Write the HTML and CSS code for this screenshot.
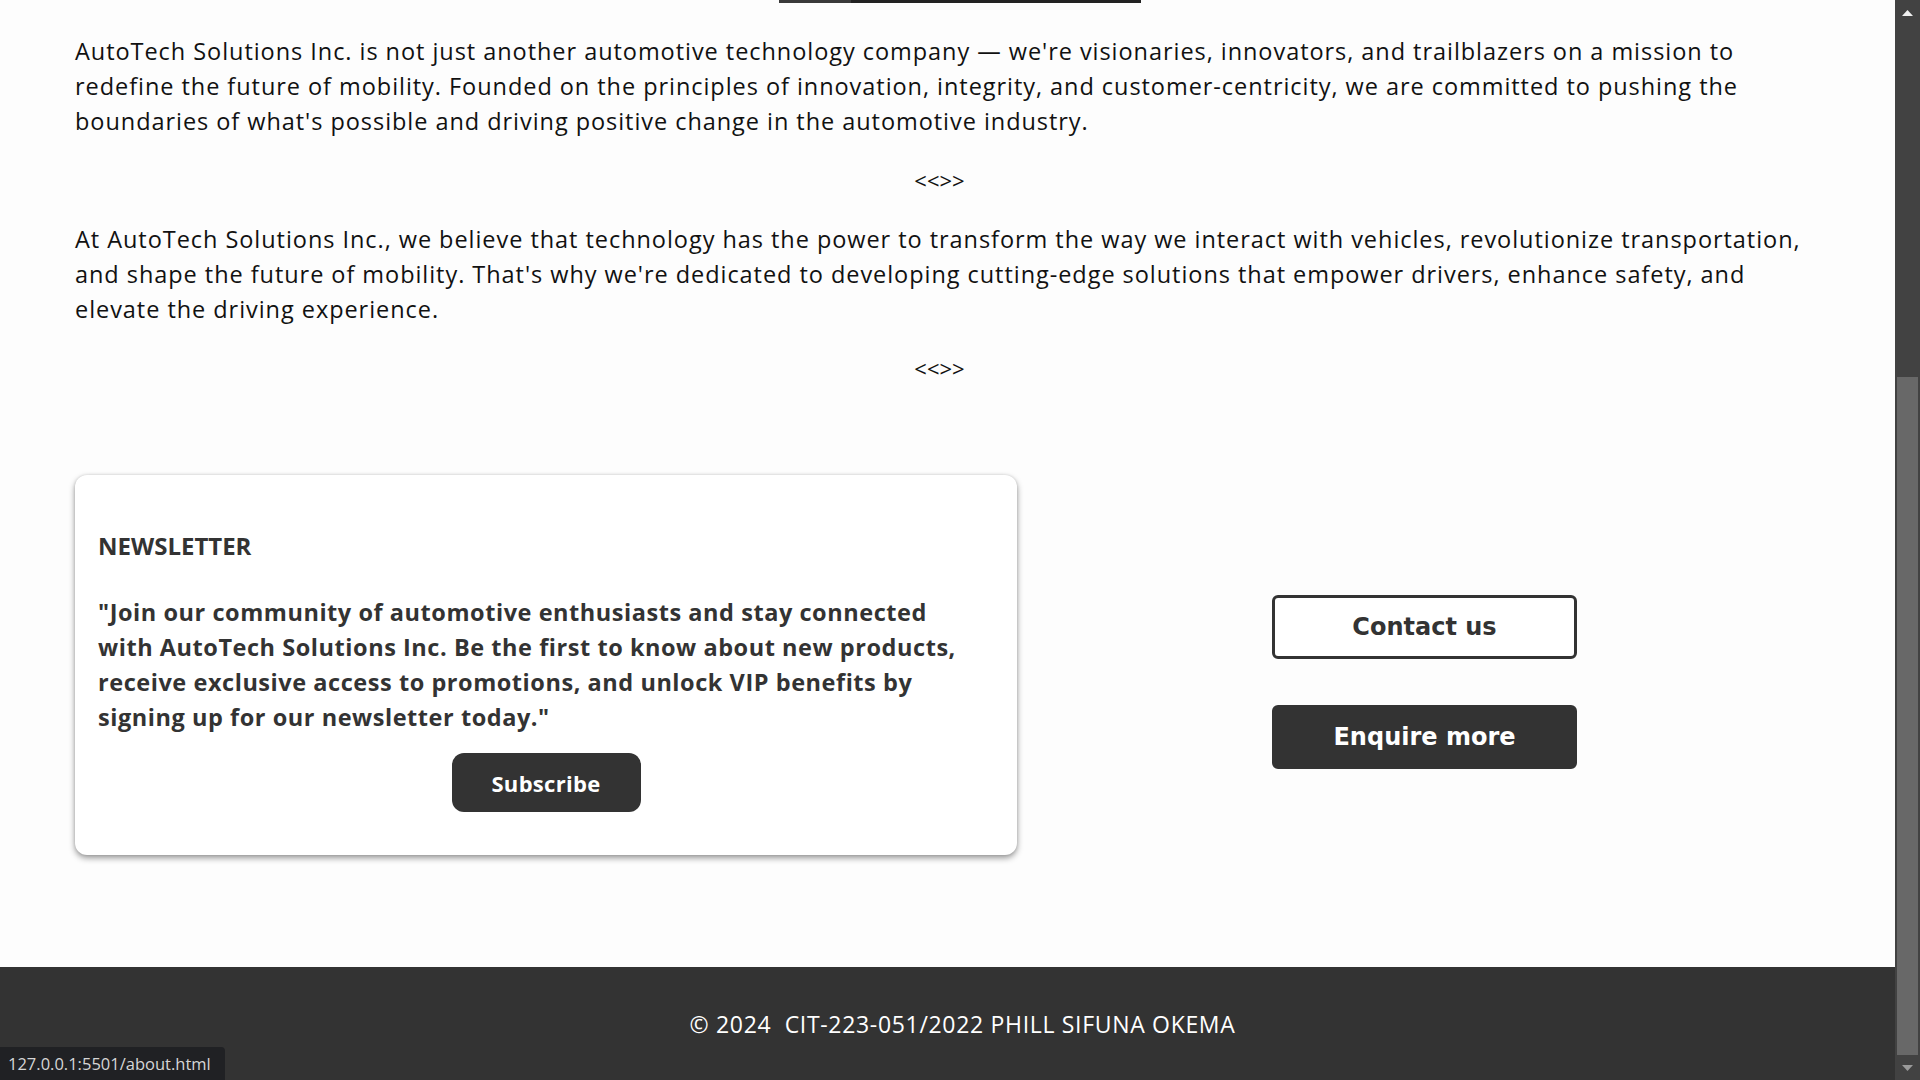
FILE: index.html
```html
<!DOCTYPE html>
<html lang="en">
<head>
<meta charset="utf-8">
<title>About - AutoTech Solutions Inc.</title>
<link rel="stylesheet" href="styles.css">
</head>
<body>
<div class="page">
  <div class="topbar"></div>
  <main class="content">
    <p class="lead">AutoTech Solutions Inc. is not just another automotive technology company — we're visionaries, innovators, and trailblazers on a mission to redefine the future of mobility. Founded on the principles of innovation, integrity, and customer-centricity, we are committed to pushing the boundaries of what's possible and driving positive change in the automotive industry.</p>
    <div class="sep">&lt;&lt;&gt;&gt;</div>
    <p class="lead">At AutoTech Solutions Inc., we believe that technology has the power to transform the way we interact with vehicles, revolutionize transportation, and shape the future of mobility. That's why we're dedicated to developing cutting-edge solutions that empower drivers, enhance safety, and elevate the driving experience.</p>
    <div class="sep">&lt;&lt;&gt;&gt;</div>
  </main>
  <section class="cta">
    <div class="card">
      <h3 class="card-title">NEWSLETTER</h3>
      <p class="card-quote">"Join our community of automotive enthusiasts and stay connected with AutoTech Solutions Inc. Be the first to know about new products, receive exclusive access to promotions, and unlock VIP benefits by signing up for our newsletter today."</p>
      <div class="card-actions"><button class="btn-subscribe">Subscribe</button></div>
    </div>
    <div class="actions">
      <button class="btn btn-outline">Contact us</button>
      <button class="btn btn-solid">Enquire more</button>
    </div>
  </section>
  <footer class="footer">
    <p class="footer-text">© 2024&nbsp; CIT-223-051/2022 PHILL SIFUNA OKEMA</p>
  </footer>
</div>
<div class="scrollbar">
  <div class="sb-btn"><svg width="11" height="6" viewBox="0 0 11 6"><path d="M0 6 L5.5 0 L11 6 Z" fill="#f0f0f0"/></svg></div>
  <div class="sb-space"></div>
  <div class="sb-thumb"></div>
  <div class="sb-btn"><svg width="11" height="6" viewBox="0 0 11 6"><path d="M0 0 L5.5 6 L11 0 Z" fill="#9a9a9a"/></svg></div>
</div>
<div class="status">127.0.0.1:5501/about.html</div>
</body>
</html>
```
FILE: styles.css
```css
html, body {
  margin: 0;
  padding: 0;
  height: 100%;
}
body {
  display: flex;
  overflow: hidden;
  background: #fdfdfd;
  font-family: "Open Sans", "Liberation Sans", sans-serif;
  color: #111;
}
.page {
  flex: 1;
  display: flex;
  flex-direction: column;
  min-width: 0;
}
.topbar {
  width: 362px;
  height: 3px;
  margin-left: 779px;
  background: linear-gradient(to right, #3a3a3a 0, #3a3a3a 72px, #222 72px);
}
.content {
  padding: 31px 75px 0 75px;
}
.lead {
  margin: 0;
  font-size: 23.5px;
  line-height: 35px;
  letter-spacing: 0.95px;
}
.sep {
  margin: 24px 0;
  padding-right: 16px;
  text-align: center;
  font-size: 22px;
  line-height: 35px;
}
.cta {
  display: flex;
  align-items: flex-start;
  gap: 255px;
  padding: 65px 0 0 75px;
  margin-bottom: 112px;
}
.card {
  width: 942px;
  box-sizing: border-box;
  background: #fff;
  border-radius: 12px;
  box-shadow: 0 3px 6px rgba(0,0,0,0.4), 0 0 3px rgba(0,0,0,0.12);
  padding: 53px 52px 43px 23px;
  color: #333;
}
.card-title {
  margin: 0;
  font-size: 24px;
  line-height: 36px;
  font-weight: 700;
}
.card-quote {
  margin: 31px 0 0 0;
  font-size: 23.5px;
  line-height: 35px;
  font-weight: 700;
  letter-spacing: 0.55px;
}
.card-actions {
  display: flex;
  justify-content: center;
  margin: 18px -29px 0 0;
}
.btn-subscribe {
  width: 189px;
  height: 59px;
  border: none;
  border-radius: 12px;
  background: #333;
  color: #fff;
  font-family: "Open Sans", sans-serif;
  font-weight: 700;
  font-size: 22px;
  letter-spacing: 0.3px;
}
.actions {
  display: flex;
  flex-direction: column;
  gap: 46px;
  margin-top: 120px;
}
.btn {
  width: 305px;
  height: 64px;
  box-sizing: border-box;
  border-radius: 6px;
  font-family: "DejaVu Sans", Verdana, sans-serif;
  font-weight: 700;
  font-size: 24px;
}
.btn-outline {
  background: #fff;
  color: #333;
  border: 3px solid #333;
}
.btn-solid {
  background: #333;
  color: #fff;
  border: 3px solid #333;
}
.footer {
  background: #333;
  height: 113px;
  display: flex;
  align-items: center;
  justify-content: center;
  padding-left: 30px;
}
.footer-text {
  margin: 0;
  color: #fff;
  font-size: 23px;
  letter-spacing: 0.68px;
}
.scrollbar {
  width: 25px;
  flex: none;
  background: #424242;
  display: flex;
  flex-direction: column;
}
.sb-btn {
  height: 25px;
  display: flex;
  align-items: center;
  justify-content: center;
}
.sb-space {
  height: 352px;
}
.sb-thumb {
  flex: 1;
  margin: 0 2px;
  background: #686868;
}
.status {
  position: fixed;
  left: 0;
  bottom: 0;
  width: 225px;
  height: 33px;
  box-sizing: border-box;
  padding-left: 8px;
  background: #202124;
  border-top-right-radius: 4px;
  color: #d6d6d6;
  font-family: "Open Sans", sans-serif;
  font-size: 16.5px;
  line-height: 33px;
  white-space: nowrap;
}
```
